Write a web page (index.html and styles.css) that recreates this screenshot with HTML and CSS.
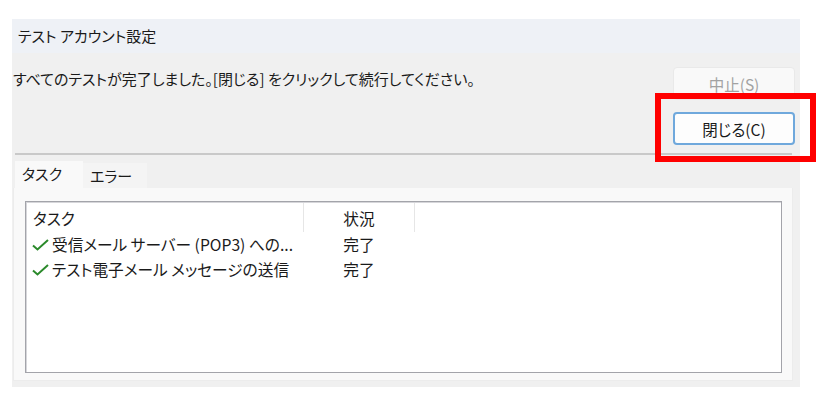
FILE: index.html
```html
<!DOCTYPE html>
<html lang="ja">
<head>
    <meta charset="UTF-8">
    <meta name="viewport" content="width=device-width, initial-scale=1.0">
    <title>テスト アカウント設定</title>
    <link rel="stylesheet" href="styles.css">
</head>
<body>
    <div class="dialog">
        <div class="titlebar">テスト アカウント設定</div>
        <div class="top">
            <p class="message">すべてのテストが完了しました。[閉じる] をクリックして続行してください。</p>
            <div class="buttons">
                <button type="button" class="btn btn-disabled" disabled>中止(S)</button>
                <button type="button" class="btn btn-default">閉じる(C)</button>
                <div class="highlight"></div>
            </div>
        </div>
        <div class="separator"></div>
        <div class="tabs">
            <div class="tab active">タスク</div>
            <div class="tab">エラー</div>
        </div>
        <div class="panel">
            <div class="list">
                <div class="row header">
                    <div class="col-task">タスク</div>
                    <div class="col-status">状況</div>
                    <div class="col-rest"></div>
                </div>
                <div class="row">
                    <div class="col-task">
                        <svg class="check" width="17" height="12" viewBox="0 0 17 12">
                            <path d="M1 6.5 L5.5 10.5 L16 1" fill="none" stroke="#2b8a2b" stroke-width="2"/>
                        </svg>
                        受信メール サーバー (POP3) への...
                    </div>
                    <div class="col-status">完了</div>
                    <div class="col-rest"></div>
                </div>
                <div class="row">
                    <div class="col-task">
                        <svg class="check" width="17" height="12" viewBox="0 0 17 12">
                            <path d="M1 6.5 L5.5 10.5 L16 1" fill="none" stroke="#2b8a2b" stroke-width="2"/>
                        </svg>
                        テスト電子メール メッセージの送信
                    </div>
                    <div class="col-status">完了</div>
                    <div class="col-rest"></div>
                </div>
            </div>
        </div>
    </div>
</body>
</html>
```

FILE: styles.css
```css
body {
    margin: 0;
    background: #ffffff;
    font-family: "Noto Sans CJK JP", "Noto Sans", sans-serif;
    font-size: 15px;
    font-feature-settings: "palt";
    color: #1a1a1a;
}
.dialog {
    width: 788px;
    height: 368px;
    margin: 19px 0 0 12px;
    background: #f0f0f0;
}
.titlebar {
    height: 34px;
    line-height: 34px;
    padding-left: 6px;
    background: #eef1f6;
}
.top {
    display: flex;
    justify-content: space-between;
    padding: 14px 5px 8px 1px;
}
.message {
    margin: 0;
    line-height: 24px;
}
.buttons {
    position: relative;
    display: flex;
    flex-direction: column;
    gap: 12px;
}
.btn {
    width: 122px;
    height: 33px;
    font-family: inherit;
    font-size: 15.5px;
    font-feature-settings: "palt";
    border-radius: 4px;
    padding: 0;
}
.btn-disabled {
    background: #f9f9f9;
    border: 1px solid #e9e9e9;
    color: #a2a2a2;
}
.btn-default {
    background: #fdfdfd;
    border: 2px solid #6fa8dc;
    color: #1a1a1a;
}
/* red annotation frame over the close button */
.highlight {
    position: absolute;
    left: -18px;
    top: 26px;
    width: 149px;
    height: 57px;
    border: 6px solid #ff0000;
}
.separator {
    height: 2px;
    margin: 0 8px 0 3px;
    background: #c9c9c9;
}
.tabs {
    display: flex;
    align-items: flex-end;
    margin: 6px 0 0 3px;
    height: 27px;
}
.tab {
    height: 25px;
    line-height: 25px;
    padding: 0 7px;
    width: 64px;
    box-sizing: border-box;
    background: #f4f4f4;
}
.tab.active {
    width: 68px;
    height: 27px;
    line-height: 26px;
    background: #f9f9f9;
}
.panel {
    margin: 0 7px 0 1px;
    height: 193px;
    padding: 13px 10px 0 11px;
    box-sizing: border-box;
    background: #f9f9f9;
    border: 1px solid #ececec;
    border-top: none;
}
.list {
    height: 170px;
    font-size: 15.7px;
    background: #ffffff;
    border: 1px solid #a3a4aa;
    box-shadow: inset 1px 1px 0 #d6d6da;
}
.row {
    display: flex;
    height: 25px;
    line-height: 25px;
}
.row.header {
    height: 30px;
    line-height: 24px;
}
.col-task {
    width: 278px;
    padding-left: 7px;
    box-sizing: border-box;
    display: flex;
    align-items: center;
    white-space: nowrap;
}
.col-status {
    width: 110px;
    text-align: center;
}
.col-rest {
    flex: 1;
}
.header .col-task,
.header .col-status {
    border-right: 1px solid #e6e6e6;
    margin-top: 1px;
    padding-top: 4px;
    align-items: flex-start;
}
.check {
    margin: 0 3px 0 -1px;
}
```
